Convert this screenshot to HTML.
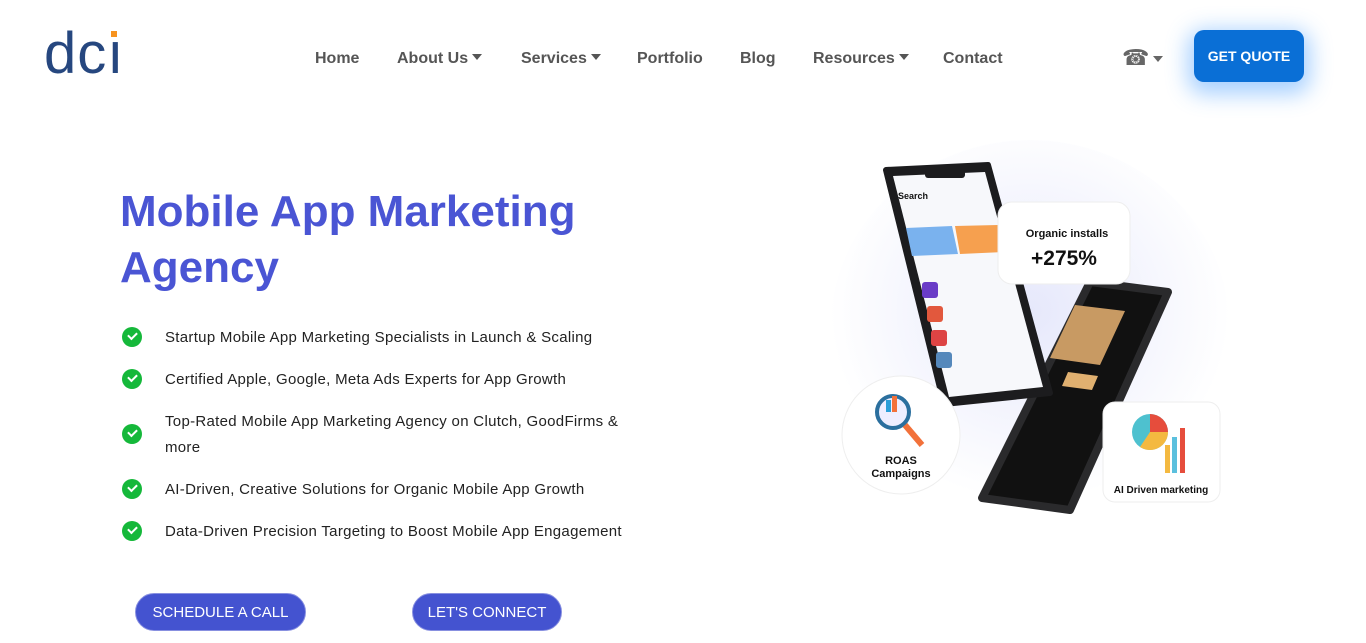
<!DOCTYPE html>
<html><head><meta charset="utf-8"><style>
*{margin:0;padding:0;box-sizing:border-box}
body{width:1366px;height:643px;overflow:hidden;background:#fff;font-family:"Liberation Sans",sans-serif;position:relative}
.logo{position:absolute;left:44px;top:24px;font-size:58px;color:#26477f;letter-spacing:1px;font-family:"Liberation Sans",sans-serif;font-weight:normal;line-height:60px}
.nav{position:absolute;top:50px;font-size:16px;font-weight:bold;color:#555}
.caret{display:inline-block;width:0;height:0;border-left:5px solid transparent;border-right:5px solid transparent;border-top:6px solid #555;vertical-align:3px;margin-left:4px}
.quote{position:absolute;left:1194px;top:30px;width:110px;height:52px;background:#0a6fd6;border-radius:10px;color:#fff;font-weight:bold;font-size:14px;text-align:center;line-height:52px;box-shadow:0 6px 22px 6px rgba(60,150,255,.45)}
h1{position:absolute;left:120px;top:184px;font-size:44px;line-height:56px;color:#4a55d4;font-weight:bold;width:520px}
.li{position:absolute;left:165px;font-size:15px;color:#222;line-height:26px;width:470px;letter-spacing:.3px}
.chk{position:absolute;left:122px;width:20px;height:20px;border-radius:50%;background:#15b83a}
.chk:after{content:"";position:absolute;left:6px;top:5px;width:7px;height:4px;border-left:2px solid #fff;border-bottom:2px solid #fff;transform:rotate(-45deg)}
.btn{position:absolute;top:593px;height:38px;border-radius:19px;background:#4453d0;color:#fff;font-size:15px;line-height:38px;text-align:center;border:1px solid #8890e0}
</style></head><body>
<div class="logo">dc<span style="position:relative">ı<span style="position:absolute;left:4px;top:10px;width:6px;height:6px;background:#f7931e"></span></span></div>
<div class="nav" style="left:315px">Home</div>
<div class="nav" style="left:397px">About Us<span class="caret"></span></div>
<div class="nav" style="left:521px">Services<span class="caret"></span></div>
<div class="nav" style="left:637px">Portfolio</div>
<div class="nav" style="left:740px">Blog</div>
<div class="nav" style="left:813px">Resources<span class="caret"></span></div>
<div class="nav" style="left:943px">Contact</div>
<div style="position:absolute;left:1122px;top:45px;font-size:22px;color:#666">☎<span class="caret" style="border-top-color:#666"></span></div>
<div class="quote">GET QUOTE</div>

<h1>Mobile App Marketing Agency</h1>
<div class="chk" style="top:327px"></div><div class="li" style="top:325px">Startup Mobile App Marketing Specialists in Launch &amp; Scaling</div>
<div class="chk" style="top:369px"></div><div class="li" style="top:367px">Certified Apple, Google, Meta Ads Experts for App Growth</div>
<div class="chk" style="top:424px"></div><div class="li" style="top:409px">Top-Rated Mobile App Marketing Agency on Clutch, GoodFirms &amp; more</div>
<div class="chk" style="top:479px"></div><div class="li" style="top:477px">AI-Driven, Creative Solutions for Organic Mobile App Growth</div>
<div class="chk" style="top:521px"></div><div class="li" style="top:519px">Data-Driven Precision Targeting to Boost Mobile App Engagement</div>
<div class="btn" style="left:135px;width:171px">SCHEDULE A CALL</div>
<div class="btn" style="left:412px;width:150px">LET'S CONNECT</div>

<svg style="position:absolute;left:820px;top:140px" width="420" height="390" viewBox="820 140 420 390">
<defs><radialGradient id="g" cx="0.5" cy="0.45" r="0.5"><stop offset="0" stop-color="#e6e8fb"/><stop offset="1" stop-color="#fff"/></radialGradient></defs>
<ellipse cx="1030" cy="330" rx="200" ry="190" fill="url(#g)"/>
<polygon points="1090,282 1168,292 1070,510 982,498" fill="#111" stroke="#2a2a2c" stroke-width="8" stroke-linejoin="round"/>
<polygon points="1075,305 1125,311 1100,365 1050,358" fill="#c89a63"/>
<polygon points="1068,372 1098,376 1092,390 1062,386" fill="#e0b070"/>
<polygon points="886,170 988,165 1050,393 944,404" fill="#1c1c1e" stroke="#1c1c1e" stroke-width="6" stroke-linejoin="round"/>
<polygon points="893,176 985,172 1043,387 949,397" fill="#f7f8fb"/>
<rect x="925" y="170" width="40" height="8" rx="3" fill="#1c1c1e"/>
<text x="898" y="199" font-size="9" font-weight="bold" font-family="Liberation Sans" fill="#111">Search</text>
<polygon points="906,228 952,226 958,254 912,256" fill="#7ab2ee"/>
<polygon points="955,226 998,225 1004,252 960,254" fill="#f6a04f"/>
<rect x="922" y="282" width="16" height="16" rx="3" fill="#6a3cc7"/>
<rect x="927" y="306" width="16" height="16" rx="3" fill="#e2583d"/>
<rect x="931" y="330" width="16" height="16" rx="3" fill="#d44"/>
<rect x="936" y="352" width="16" height="16" rx="3" fill="#58b"/>
<rect x="998" y="202" width="132" height="82" rx="14" fill="#fff" stroke="#eee"/>
<text x="1067" y="237" text-anchor="middle" font-size="11" font-weight="bold" font-family="Liberation Sans" fill="#111">Organic installs</text>
<text x="1064" y="265" text-anchor="middle" font-size="21" font-weight="bold" font-family="Liberation Sans" fill="#111">+275%</text>
<circle cx="901" cy="435" r="59" fill="#fff" stroke="#eee"/>
<circle cx="893" cy="412" r="16" fill="#eef" stroke="#2b6f9e" stroke-width="4"/>
<rect x="886" y="400" width="5" height="12" fill="#2a9ed8"/><rect x="892" y="396" width="5" height="16" fill="#f2713a"/>
<line x1="905" y1="425" x2="922" y2="445" stroke="#f2713a" stroke-width="6"/>
<text x="901" y="464" text-anchor="middle" font-size="11" font-weight="bold" font-family="Liberation Sans" fill="#111">ROAS</text>
<text x="901" y="477" text-anchor="middle" font-size="11" font-weight="bold" font-family="Liberation Sans" fill="#111">Campaigns</text>
<rect x="1103" y="402" width="117" height="100" rx="12" fill="#fff" stroke="#eee"/>
<circle cx="1150" cy="432" r="18" fill="#4ec1cf"/>
<path d="M1150 432 L1150 414 A18 18 0 0 1 1168 432 Z" fill="#e64d3c"/>
<path d="M1150 432 L1168 432 A18 18 0 0 1 1140 447 Z" fill="#f4b940"/>
<rect x="1165" y="445" width="5" height="28" fill="#f4b940"/><rect x="1172" y="437" width="5" height="36" fill="#5bc0de"/><rect x="1180" y="428" width="5" height="45" fill="#e64d3c"/>
<text x="1161" y="493" text-anchor="middle" font-size="10" font-weight="bold" font-family="Liberation Sans" fill="#111">AI Driven marketing</text>
</svg>
</body></html>
